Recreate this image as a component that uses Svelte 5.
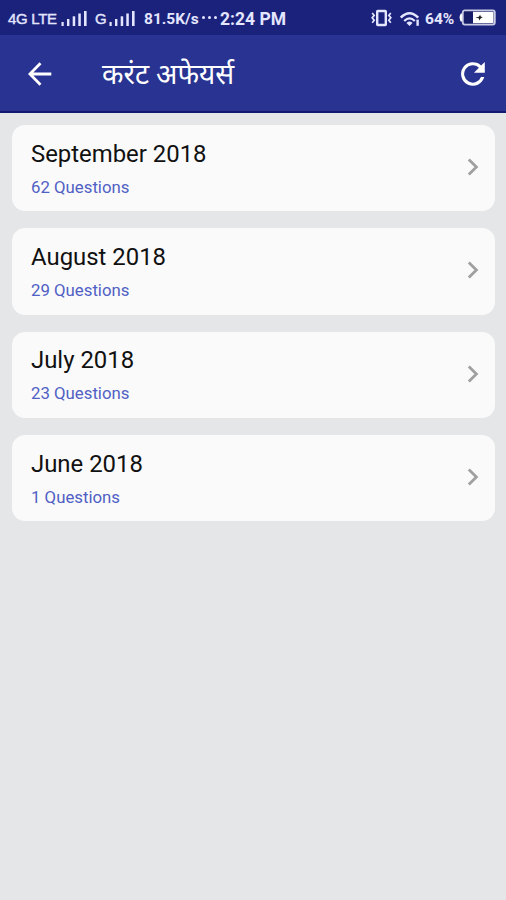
<script lang="ts">
  interface Month {
    title: string
    questions: number
  }

  const months: Month[] = [
    { title: 'September 2018', questions: 62 },
    { title: 'August 2018', questions: 29 },
    { title: 'July 2018', questions: 23 },
    { title: 'June 2018', questions: 1 },
  ]
</script>

{#snippet signal()}
  <svg class="signal" width="27" height="17" viewBox="0 0 27 17" fill="#e4e6ff">
    <rect x="0.5" y="12" width="2.2" height="4" />
    <rect x="6" y="9" width="2.4" height="7" />
    <rect x="11.7" y="6.3" width="2.5" height="9.7" />
    <rect x="17.3" y="3.5" width="2.5" height="12.5" />
    <rect x="23" y="1" width="2.6" height="15" />
  </svg>
{/snippet}

<div class="screen">
  <div class="status">
    <span class="network">4G LTE</span>
    {@render signal()}
    <span class="network second">G</span>
    {@render signal()}
    <span class="speed">81.5K/s</span>
    <span class="dots"><i></i><i></i><i></i></span>
    <span class="time">2:24 PM</span>
    <span class="spacer"></span>
    <svg class="vibrate" width="21" height="18" viewBox="0 0 21 18" fill="none" stroke="#e4e6ff">
      <rect x="6.2" y="2" width="8.6" height="14" rx="0.5" stroke-width="2.4" />
      <path d="M1.2 4l2 2.4-2 2.4 2 2.4-2 2.6M19.8 4l-2 2.4 2 2.4-2 2.4 2 2.6" stroke-width="1.7" />
    </svg>
    <svg class="wifi" width="21" height="16" viewBox="0 0 21 16" fill="none" stroke="#e4e6ff">
      <path d="M0.8 6.6Q9.5-2.2 18.2 6.6" stroke-width="2.6" />
      <path d="M4.2 10Q9.5 4.8 14.8 10" stroke-width="2.3" />
      <path d="M6.5 12Q9.5 9.2 12.5 12L9.5 15z" fill="#e4e6ff" stroke="none" />
      <path d="M17.6 8.6v6.2" stroke-width="2.4" />
    </svg>
    <span class="percent">64%</span>
    <svg class="battery" width="37" height="17" viewBox="0 0 37 17">
      <path d="M3 4.5H1.8Q-0.6 8.5 1.8 12.5H3z" fill="#fff" />
      <rect x="3.8" y="1.4" width="32" height="14.2" rx="2" fill="#161c68" stroke="#c9cbe4" stroke-width="1.8" />
      <rect x="14" y="2.8" width="20.5" height="11.4" fill="#fff" />
      <path d="M16.5 8.5l3.4-.8 1.2-2 .7 1.8 2 .8-2 1-1.3 2.2-.8-2.2z" fill="#222" />
    </svg>
  </div>

  <header>
    <button class="back" aria-label="Back">
      <svg width="24" height="24" viewBox="0 0 24 24" fill="none" stroke="#fff" stroke-width="2.8">
        <path d="M23.3 12H2.2M12.5 1.3L1.9 12l10.6 10.7" />
      </svg>
    </button>
    <h1>करंट अफेयर्स</h1>
    <button class="refresh" aria-label="Refresh">
      <svg width="24" height="24" viewBox="0 0 24 24">
        <path
          d="M20.1 3.5A11.8 11.8 0 1 0 23.3 15H20A8.7 8.7 0 1 1 17.9 5.7L13 10.7H23.8V0z"
          fill="#fff"
        />
      </svg>
    </button>
  </header>

  <main>
    {#each months as month}
      <div class="card">
        <div>
          <h2>{month.title}</h2>
          <p>{month.questions} Questions</p>
        </div>
        <svg class="chevron" width="12" height="18" viewBox="0 0 12 18" fill="none">
          <path d="M1.8 1.4L9.4 9l-7.6 7.6" stroke="#a0a0a0" stroke-width="2.8" />
        </svg>
      </div>
    {/each}
  </main>
</div>

<style>
  :global(body) {
    background: #e4e6e8;
  }

  .screen {
    height: 900px;
    overflow: hidden;
    background: #e4e6e8;
    font-family: Roboto, 'Noto Sans', sans-serif;
  }

  .status {
    box-sizing: border-box;
    height: 35px;
    padding: 2px 10px 0 8px;
    display: flex;
    align-items: center;
    background: #1b227c;
    color: #e4e6ff;
    white-space: nowrap;
  }

  .network {
    width: 50px;
    margin-right: 3px;
    font-family: 'Liberation Sans', Arial, sans-serif;
    font-size: 15px;
    letter-spacing: -0.3px;
    -webkit-text-stroke: 0.4px #e4e6ff;
  }

  .second {
    width: 12px;
    margin-left: 7px;
    margin-right: 2px;
  }

  .signal {
    margin-top: -1px;
  }

  .speed {
    width: 56px;
    margin-left: 8px;
    font-size: 15.5px;
    font-weight: 700;
  }

  .dots {
    width: 18px;
    margin-left: 2px;
    margin-top: -2px;
    display: flex;
    gap: 3px;
  }

  .dots i {
    width: 3px;
    height: 3px;
    border-radius: 50%;
    background: #e4e6ff;
  }

  .time {
    font-size: 17.5px;
    font-weight: 700;
  }

  .spacer {
    flex: 1;
  }

  .vibrate {
    margin-top: -2px;
  }

  .wifi {
    margin-left: 8px;
  }

  .percent {
    width: 31px;
    margin-left: 4px;
    font-size: 15.5px;
    font-weight: 700;
  }

  .battery {
    margin-left: 3px;
    margin-top: -2px;
  }

  header {
    box-sizing: border-box;
    height: 78px;
    padding: 2px 21px 0 28px;
    display: flex;
    align-items: center;
    background: #283392;
    border-bottom: 2px solid #141970;
  }

  button {
    padding: 0;
    border: 0;
    background: none;
  }

  button svg {
    display: block;
  }

  h1 {
    flex: 1;
    margin: 2px 0 0 50px;
    color: #fff;
    font-size: 28px;
    font-weight: 400;
    line-height: 40px;
  }

  main {
    padding: 12px 11px 0 12px;
    display: flex;
    flex-direction: column;
    gap: 17px;
  }

  .card {
    box-sizing: border-box;
    height: 86.3px;
    padding: 0 16px 0 19px;
    display: flex;
    align-items: center;
    justify-content: space-between;
    border-radius: 13px;
    background: #fafafa;
  }

  .chevron {
    margin-top: -2px;
  }

  h2 {
    margin: 0;
    color: #111;
    font-size: 23.9px;
    font-weight: 400;
    line-height: 32px;
  }

  p {
    margin: 5px 0 0;
    color: #5060c4;
    font-size: 16.8px;
    line-height: 24px;
  }
</style>
